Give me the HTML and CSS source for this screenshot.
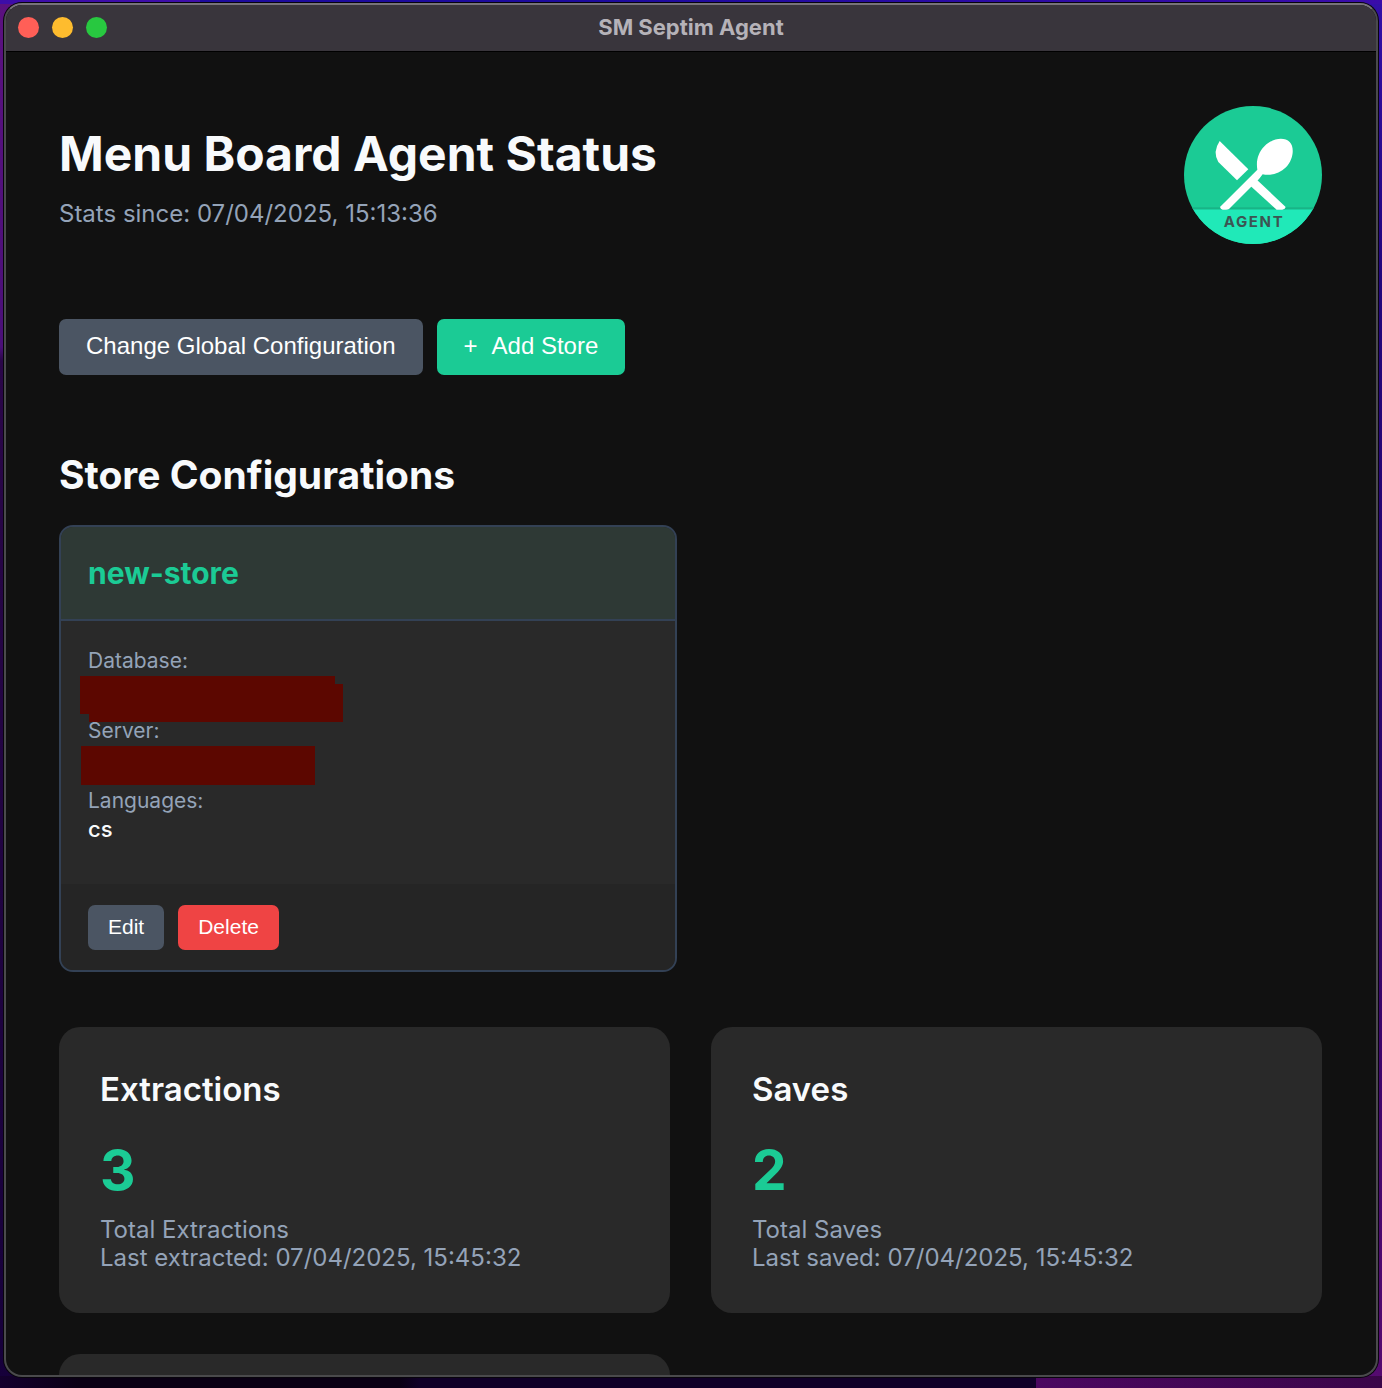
FILE: index.html
```html
<!DOCTYPE html>
<html lang="en">
<head>
<meta charset="utf-8">
<meta name="viewport" content="width=device-width, initial-scale=1">
<title>SM Septim Agent</title>
<link rel="stylesheet" href="styles.css">
</head>
<body>
<div class="window">
  <div class="titlebar">
    <div class="lights">
      <span class="light light-close"></span>
      <span class="light light-minimize"></span>
      <span class="light light-zoom"></span>
    </div>
    <div class="titlebar-text">SM Septim Agent</div>
  </div>
  <main class="content">
    <header class="page-header">
      <div>
        <h1 class="page-title">Menu Board Agent Status</h1>
        <p class="muted">Stats since: 07/04/2025, 15:13:36</p>
      </div>
      <svg class="logo" viewBox="45 47 414 414" role="img" aria-label="Agent logo">
        <defs>
          <clipPath id="disc"><circle cx="252" cy="254" r="207"/></clipPath>
        </defs>
        <g clip-path="url(#disc)">
          <rect x="45" y="47" width="414" height="414" fill="#1bcb95"/>
          <rect x="45" y="357" width="414" height="104" fill="#20e9b8"/>
          <rect x="45" y="351" width="414" height="6" fill="#19b486"/>
          <g fill="#fff">
            <path d="M152 152 L238 237 L204 270 L148 215 Q130 185 152 152 Z"/>
            <path d="M238 281 L258 263 L350 350 Q349 357 340 358 L323 358 Z"/>
            <path d="M153 350 L265 238 C261 213 266 188 287 167 C312 142 347 140 362 155 C377 170 374 206 351 231 C331 250 305 257 281 252 L270 266 L180 356 Q176 358 171 358 L161 358 Q154 357 153 350 Z"/>
          </g>
          <text class="logo-text" x="255" y="411" text-anchor="middle">AGENT</text>
        </g>
      </svg>
    </header>

    <div class="actions">
      <button class="btn btn-secondary" type="button">Change Global Configuration</button>
      <button class="btn btn-primary" type="button"><span class="plus">+</span>Add Store</button>
    </div>

    <h2 class="section-title">Store Configurations</h2>
    <div class="stores">
      <article class="store">
        <h3 class="store-name">new-store</h3>
        <dl class="store-details">
          <dt>Database:</dt>
          <dd><span class="redacted redacted-database"></span></dd>
          <dt>Server:</dt>
          <dd><span class="redacted redacted-server"></span></dd>
          <dt>Languages:</dt>
          <dd>cs</dd>
        </dl>
        <footer class="store-footer">
          <button class="btn btn-small btn-secondary" type="button">Edit</button>
          <button class="btn btn-small btn-danger" type="button">Delete</button>
        </footer>
      </article>
    </div>

    <div class="stats">
      <section class="stat">
        <h3 class="stat-title">Extractions</h3>
        <div class="stat-value">3</div>
        <p class="muted">Total Extractions</p>
        <p class="muted">Last extracted: 07/04/2025, 15:45:32</p>
      </section>
      <section class="stat">
        <h3 class="stat-title">Saves</h3>
        <div class="stat-value">2</div>
        <p class="muted">Total Saves</p>
        <p class="muted">Last saved: 07/04/2025, 15:45:32</p>
      </section>
      <section class="stat"></section>
    </div>
  </main>
</div>
</body>
</html>
```
FILE: styles.css
```css
* {
  box-sizing: border-box;
}

body {
  margin: 0;
  height: 100vh;
  padding: 3px 4px 11px;
  display: flex;
  font-family: Inter, "Liberation Sans", sans-serif;
  font-size: 24px;
  color: #f8fafc;
  background:
    linear-gradient(to right, #3d0da8 0 200px, #1c0a9c 200px 600px, #3a0caa) top / 100% 4px no-repeat,
    linear-gradient(38deg, #4b0760, #3a0648) right bottom / 346px 12px no-repeat,
    linear-gradient(to right, #14002e, #0a0014 80px 400px, #100028 420px) bottom / 100% 12px no-repeat,
    linear-gradient(#5b1180, #4a0f78 25%, #2a0648 26%, #16003a) left / 50% 100% no-repeat,
    linear-gradient(#3210a8, #22067c 20%, #2c0568 60%, #560a70) right / 50% 100% no-repeat;
}

h1, h2, h3, p, dl, dd {
  margin: 0;
}

.window {
  flex: 1;
  display: flex;
  flex-direction: column;
  overflow: hidden;
  border: 2px solid #4a4a4c;
  border-top-color: #77737a;
  border-radius: 18px;
  background: #111111;
  box-shadow: 0 0 0 1px #08040c;
}

.titlebar {
  flex: none;
  display: grid;
  grid-template-columns: 1fr auto 1fr;
  align-items: center;
  height: 47px;
  padding: 0 12px 2px;
  background: #39353c;
  border-bottom: 1px solid #000;
}

.lights {
  display: flex;
  gap: 13px;
}

.light {
  width: 21px;
  height: 21px;
  border-radius: 50%;
}

.light-close { background: #ff5f57; }
.light-minimize { background: #febc2e; }
.light-zoom { background: #28c840; }

.titlebar-text {
  font-size: 22px;
  font-weight: 700;
  color: #b5b2b8;
}

.content {
  flex: 1;
  min-height: 0;
  overflow: hidden;
  padding: 54px 54px 0 53px;
}

.page-header {
  display: flex;
  justify-content: space-between;
  align-items: center;
}

.page-title {
  font-size: 48px;
  font-weight: 700;
  line-height: 64px;
  margin-bottom: 14px;
}

.muted {
  font-size: 24px;
  line-height: 28px;
  color: #94a3b8;
}

.logo {
  width: 138px;
  height: 138px;
}

.logo-text {
  font: 700 45px Inter, sans-serif;
  letter-spacing: 5px;
  fill: #3c5552;
}

.actions {
  display: flex;
  gap: 14px;
  margin-top: 75px;
}

.btn {
  height: 56px;
  padding: 0 27px 2px;
  border: 0;
  border-radius: 7px;
  font-family: "Liberation Sans", Arial, sans-serif;
  font-size: 24px;
  color: #fff;
}

.btn-small {
  height: 45px;
  padding: 0 20px 2px;
  font-size: 21px;
}

.btn-secondary { background: #4b5563; }
.btn-primary { background: #1bcb95; }
.btn-danger { background: #ef4444; }

.plus {
  margin-right: 14px;
}

.section-title {
  margin-top: 74px;
  font-size: 39px;
  font-weight: 700;
  line-height: 52px;
}

.stores {
  display: grid;
  grid-template-columns: 1fr 1fr;
  gap: 28px;
  margin-top: 24px;
}

.store {
  overflow: hidden;
  border: 2px solid #334155;
  border-radius: 14px;
  background: #292929;
}

.store-name {
  padding: 27px;
  border-bottom: 2px solid #334155;
  background: #2e3935;
  font-size: 30px;
  font-weight: 700;
  line-height: 38px;
  color: #1bcb95;
}

.store-details {
  padding: 27px 27px 26px;
}

.store-details dt {
  font-size: 21px;
  line-height: 26px;
  color: #94a3b8;
}

.store-details dd {
  position: relative;
  height: 32px;
  margin-bottom: 12px;
  font-size: 22px;
  font-weight: 500;
  line-height: 30px;
}

/* Blocked-out values spill past their line on every side. */
.redacted {
  position: absolute;
  z-index: 1;
  background: #5c0700;
}

.redacted-database {
  left: -8px;
  top: 2px;
  width: 263px;
  height: 46px;
  clip-path: polygon(0 0, 255px 0, 255px 8px, 100% 8px, 100% 100%, 9px 100%, 9px 38px, 0 38px);
}

.redacted-server {
  left: -7px;
  top: 2px;
  width: 234px;
  height: 39px;
}

.store-footer {
  display: flex;
  gap: 14px;
  padding: 21px 27px 20px;
  background: #252525;
}

.stats {
  display: grid;
  grid-template-columns: 1fr 1fr;
  gap: 41px;
  margin-top: 55px;
}

.stat {
  min-height: 286px;
  padding: 41px;
  border-radius: 21px;
  background: #292929;
}

.stat-title {
  font-size: 33px;
  font-weight: 600;
  line-height: 42px;
}

.stat-value {
  margin: 26px 0 12px;
  font-size: 55px;
  font-weight: 700;
  line-height: 68px;
  color: #1bcb95;
}
```
